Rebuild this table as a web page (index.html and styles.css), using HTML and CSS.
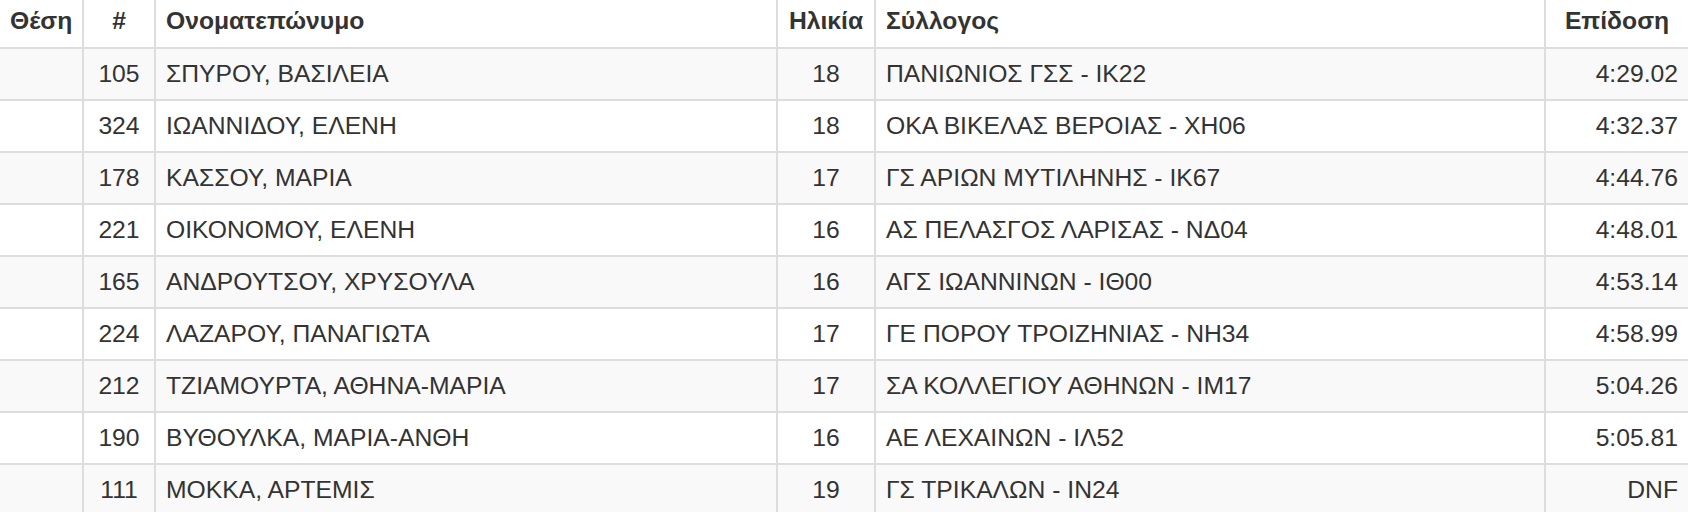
FILE: index.html
```html
<!DOCTYPE html>
<html lang="el">
<head>
<meta charset="utf-8">
<title>Αποτελέσματα</title>
<link rel="stylesheet" href="styles.css">
</head>
<body>
<table class="results">
  <colgroup>
    <col class="c-pos">
    <col class="c-bib">
    <col class="c-name">
    <col class="c-age">
    <col class="c-club">
    <col class="c-perf">
  </colgroup>
  <thead>
    <tr>
      <th class="center">Θέση</th>
      <th class="center">#</th>
      <th class="left">Ονοματεπώνυμο</th>
      <th class="center">Ηλικία</th>
      <th class="left">Σύλλογος</th>
      <th class="center last">Επίδοση</th>
    </tr>
  </thead>
  <tbody>
    <tr><td></td><td class="center">105</td><td>ΣΠΥΡΟΥ, ΒΑΣΙΛΕΙΑ</td><td class="center">18</td><td>ΠΑΝΙΩΝΙΟΣ ΓΣΣ - ΙΚ22</td><td class="right last">4:29.02</td></tr>
    <tr><td></td><td class="center">324</td><td>ΙΩΑΝΝΙΔΟΥ, ΕΛΕΝΗ</td><td class="center">18</td><td>ΟΚΑ ΒΙΚΕΛΑΣ ΒΕΡΟΙΑΣ - ΧΗ06</td><td class="right last">4:32.37</td></tr>
    <tr><td></td><td class="center">178</td><td>ΚΑΣΣΟΥ, ΜΑΡΙΑ</td><td class="center">17</td><td>ΓΣ ΑΡΙΩΝ ΜΥΤΙΛΗΝΗΣ - ΙΚ67</td><td class="right last">4:44.76</td></tr>
    <tr><td></td><td class="center">221</td><td>ΟΙΚΟΝΟΜΟΥ, ΕΛΕΝΗ</td><td class="center">16</td><td>ΑΣ ΠΕΛΑΣΓΟΣ ΛΑΡΙΣΑΣ - ΝΔ04</td><td class="right last">4:48.01</td></tr>
    <tr><td></td><td class="center">165</td><td>ΑΝΔΡΟΥΤΣΟΥ, ΧΡΥΣΟΥΛΑ</td><td class="center">16</td><td>ΑΓΣ ΙΩΑΝΝΙΝΩΝ - ΙΘ00</td><td class="right last">4:53.14</td></tr>
    <tr><td></td><td class="center">224</td><td>ΛΑΖΑΡΟΥ, ΠΑΝΑΓΙΩΤΑ</td><td class="center">17</td><td>ΓΕ ΠΟΡΟΥ ΤΡΟΙΖΗΝΙΑΣ - ΝΗ34</td><td class="right last">4:58.99</td></tr>
    <tr><td></td><td class="center">212</td><td>ΤΖΙΑΜΟΥΡΤΑ, ΑΘΗΝΑ-ΜΑΡΙΑ</td><td class="center">17</td><td>ΣΑ ΚΟΛΛΕΓΙΟΥ ΑΘΗΝΩΝ - ΙΜ17</td><td class="right last">5:04.26</td></tr>
    <tr><td></td><td class="center">190</td><td>ΒΥΘΟΥΛΚΑ, ΜΑΡΙΑ-ΑΝΘΗ</td><td class="center">16</td><td>ΑΕ ΛΕΧΑΙΝΩΝ - ΙΛ52</td><td class="right last">5:05.81</td></tr>
    <tr><td></td><td class="center">111</td><td>ΜΟΚΚΑ, ΑΡΤΕΜΙΣ</td><td class="center">19</td><td>ΓΣ ΤΡΙΚΑΛΩΝ - ΙΝ24</td><td class="right last">DNF</td></tr>
  </tbody>
</table>
</body>
</html>
```

FILE: styles.css
```css
html, body {
  margin: 0;
  padding: 0;
  background: #ffffff;
}

body {
  font-family: "Liberation Sans", Arial, Helvetica, sans-serif;
  color: #333333;
  font-size: 24.7px;
}

.results {
  width: 1688px;
  table-layout: fixed;
  border-collapse: separate;
  border-spacing: 0;
}

.c-pos { width: 84px; }
.c-bib { width: 72px; }
.c-name { width: 622px; }
.c-age { width: 98px; }
.c-club { width: 670px; }
.c-perf { width: 142px; }

.results th,
.results td {
  box-sizing: border-box;
  padding: 0 10px;
  border-right: 2px solid #dddddd;
  border-bottom: 2px solid #dddddd;
  white-space: nowrap;
  overflow: hidden;
  text-align: left;
  vertical-align: middle;
}

.results th {
  height: 49px;
  font-weight: bold;
  line-height: 26px;
  padding-bottom: 5px;
}

.results td {
  height: 52px;
  line-height: 26px;
}

.results .last {
  border-right: none;
}

.results tbody tr:nth-child(odd) td {
  background: #f9f9f9;
}

.results .center { text-align: center; }
.results .right { text-align: right; }
.results .left { text-align: left; }
```
